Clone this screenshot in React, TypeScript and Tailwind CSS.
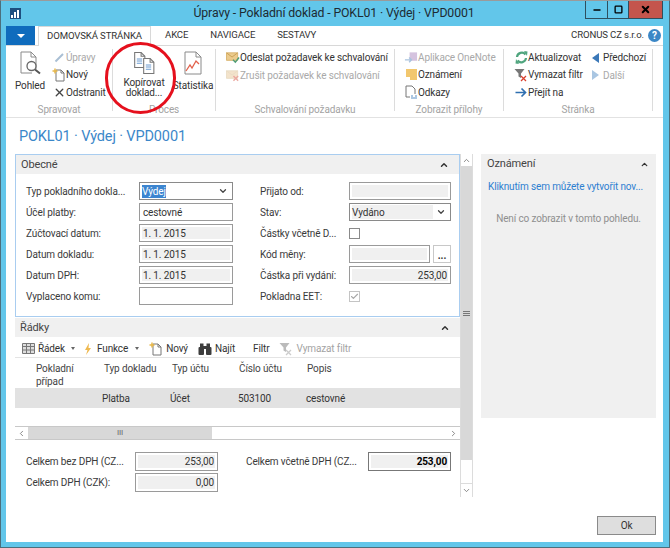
import type { ReactNode } from "react";
import { ChevronDown, ChevronLeft, ChevronRight, ChevronUp, Check, Minus, Square, X } from "lucide-react";

const Doc = ({ className = "w-[13px] h-[14px]", lines = false }: { className?: string; lines?: boolean }) => (
  <svg className={className} viewBox="0 0 14 16" fill="none">
    <path d="M2.5 1h6l3.500 3.500V15h-9.500z" fill="#fff" stroke="#777" />
    <path d="M8.500 1v3.500H12" stroke="#777" />
    {lines && <path d="M4.500 7h5M4.500 9h5M4.500 11h5" stroke="#6a9ad0" />}
  </svg>
);

const NewIcon = () => (
  <svg className="w-[14px] h-[14px]" viewBox="0 0 14 14" fill="none">
    <path d="M4 2h5l3 3v8H4z" fill="#fff" stroke="#777" />
    <path d="M9 2v3h3" stroke="#777" />
    <path d="M3 0.500v5M0.500 3h5" stroke="#e8b84a" strokeWidth="1.500" />
  </svg>
);

const FilterIcon = ({ muted = false }: { muted?: boolean }) => (
  <svg className="w-[14px] h-[14px]" viewBox="0 0 14 14" fill="none">
    <path d="M0.500 1h10L7 5.500V10L4.500 8.500V5.500z" fill={muted ? "#bbb" : "#777"} />
    <path d="M7 8l5 5M12 8l-5 5" stroke={muted ? "#ccc" : "#d9402e"} strokeWidth="1.300" />
  </svg>
);

const MailIcon = ({ muted = false }: { muted?: boolean }) => (
  <svg className="w-[14px] h-[13px]" viewBox="0 0 15 13" fill="none">
    <path d="M0.500 1.500h12v8h-12z" fill={muted ? "#f3e3cb" : "#eccb8d"} stroke={muted ? "#eadbc4" : "#d8b26a"} />
    <path d="M0.500 1.500l6 4.500 6-4.500" stroke={muted ? "#eadbc4" : "#c99f52"} />
    {muted ? (
      <path d="M8 7l5 5M13 7l-5 5" stroke="#eba9a0" strokeWidth="1.500" />
    ) : (
      <path d="M7.500 9l2.500 2.500 4-5" stroke="#4f9e76" strokeWidth="1.500" />
    )}
  </svg>
);

const SmallAction = ({ icon, children, muted = false, iconWidth = "w-[14px]" }: { icon: ReactNode; children: ReactNode; muted?: boolean; iconWidth?: string }) => (
  <div className={`flex h-[17.500px] items-center whitespace-nowrap ${muted ? "text-[#a9a9a9]" : "text-[#333]"}`}>
    <span className={`flex ${iconWidth} shrink-0 items-center justify-center`}>{icon}</span>
    <span>{children}</span>
  </div>
);

const RibbonGroup = ({ title, width, children }: { title: string; width: string; children: ReactNode }) => (
  <div className={`${width} flex h-[62px] shrink-0 flex-col border-[#dcdcdc] border-r`}>
    <div className="flex h-[52px] shrink-0 px-[1px]">{children}</div>
    <div className="mt-[3px] shrink-0 text-center text-[#a3a3a3] leading-[12px]">{title}</div>
  </div>
);

const Tab = ({ children, className = "" }: { children: ReactNode; className?: string }) => (
  <div className={`flex items-center text-[#333] ${className}`}>{children}</div>
);

const Box = ({ children, className = "", inner = "bg-[#f0f0f0]" }: { children?: ReactNode; className?: string; inner?: string }) => (
  <div className={`h-full border border-[#9a9a9a] bg-white p-[2px] ${className}`}>
    <div className={`flex h-full items-center overflow-hidden px-[1px] text-[#333] ${inner}`}>{children}</div>
  </div>
);

const Row = ({ label, children, labelClass = "w-[113px]", height = "h-[18px]" }: { label: string; children: ReactNode; labelClass?: string; height?: string }) => (
  <div className={`flex ${height} items-center`}>
    <div className={`${labelClass} shrink-0 whitespace-nowrap text-[#3a3a3a]`}>{label}</div>
    {children}
  </div>
);

const SectionHead = ({ title }: { title: string }) => (
  <div className="flex h-[19px] items-center justify-between bg-[#f0f0f0] pt-[1px] pr-[10px] pl-[5px] text-[#444] text-[11px]">
    {title}
    <ChevronUp className="h-[10px] w-[10px] text-[#333]" strokeWidth={3.500} />
  </div>
);

export default function App() {
  return (
    <div
      className="relative flex h-[548px] w-[670px] flex-col overflow-hidden border-[#4b6f7d] border-[1px] border-t-[#9a9a9a] bg-[#62c6ea] text-[10px] tracking-[-0.13px]"
      style={{ fontFamily: 'Roboto, "Open Sans", sans-serif' }}
    >
      {/* title bar */}
      <div className="flex h-[25px] shrink-0 items-start">
        <div className="mt-[7px] ml-[9px] flex h-[11px] w-[11px] items-end gap-[1px] bg-[#1d4f80] p-[1px]">
          <span className="h-[3px] w-[2px] bg-white" />
          <span className="h-[6px] w-[2px] bg-white" />
          <span className="h-[8px] w-[2px] bg-white" />
        </div>
        <div className="flex-1 pt-[4px] pl-[62px] text-center text-[#1d2b33] text-[12.300px] leading-[17px]">
          Úpravy - Pokladní doklad - POKL01 · Výdej · VPD0001
        </div>
        <div className="mr-[6px] flex h-[18px] border-[#2e4f5e] border-x border-b">
          <div className="flex w-[22px] items-center justify-center border-[#2e4f5e] border-r">
            <Minus className="h-[10px] w-[10px] text-black" strokeWidth={4} />
          </div>
          <div className="flex w-[21px] items-center justify-center border-[#2e4f5e] border-r">
            <Square className="h-[9px] w-[9px] text-black" strokeWidth={3.500} />
          </div>
          <div className="flex w-[33px] items-center justify-center bg-[#c4554c]">
            <X className="h-[11px] w-[11px] text-black" strokeWidth={4.500} />
          </div>
        </div>
      </div>

      {/* window body */}
      <div className="mr-[6px] mb-[5px] ml-[5px] flex min-h-0 flex-1 flex-col bg-white">
        {/* tabs */}
        <div className="flex h-[20px] shrink-0 border-[#d8d8d8] border-b text-[9.600px]">
          <div className="flex w-[29px] items-center justify-center bg-[#0f6cbd]">
            <span className="h-0 w-0 border-x-[4px] border-x-transparent border-t-[4px] border-t-white" />
          </div>
          <Tab className="-mb-[1px] ml-[3px] w-[113px] justify-center border-[#d8d8d8] border-x border-t bg-white">DOMOVSKÁ STRÁNKA</Tab>
          <Tab className="ml-[14px]">AKCE</Tab>
          <Tab className="ml-[22px]">NAVIGACE</Tab>
          <Tab className="ml-[22px]">SESTAVY</Tab>
          <div className="ml-auto flex items-center pr-[2px] text-[#333]">
            CRONUS CZ s.r.o.
            <span className="ml-[4px] flex h-[13px] w-[13px] items-center justify-center rounded-full bg-[#3b87c6] font-bold text-[10px] text-white">?</span>
          </div>
        </div>

        {/* ribbon */}
        <div className="flex h-[72px] shrink-0 border-[#e2e2e2] border-b pt-[3px]">
          <RibbonGroup title="Spravovat" width="w-[107px]">
            <div className="flex w-[45px] flex-col items-center pt-[2px] pl-[1px] text-[#333]">
              <svg className="h-[24px] w-[24px]" viewBox="0 0 24 24" fill="none">
                <path d="M3 1h10l5 5v12M3 1v21h11" fill="#fff" stroke="#8a8a8a" />
                <path d="M13 1v5h5" stroke="#8a8a8a" />
                <circle cx="13.500" cy="15" r="4.500" fill="#fff" stroke="#666" strokeWidth="1.300" />
                <path d="M17 18.500l5 4" stroke="#555" strokeWidth="2" />
              </svg>
              <span className="mt-[3px]">Pohled</span>
            </div>
            <div className="flex flex-col">
              <SmallAction muted icon={<svg className="h-[11px] w-[11px]" viewBox="0 0 11 11" fill="none"><path d="M1.500 9.500L9 2" stroke="#a9bfd4" strokeWidth="2" /></svg>}>Úpravy</SmallAction>
              <SmallAction icon={<NewIcon />}>Nový</SmallAction>
              <SmallAction icon={<X className="h-[13px] w-[13px] text-[#444]" strokeWidth={2.500} />}>Odstranit</SmallAction>
            </div>
          </RibbonGroup>
          <RibbonGroup title="Proces" width="w-[103px]">
            <div className="ml-[1px] flex w-[58px] flex-col items-center pt-[2px] text-center text-[#333] leading-[10px]">
              <div className="relative h-[24px] w-[24px]">
                <Doc className="absolute top-0 left-0 h-[18px] w-[15px]" lines />
                <Doc className="absolute right-0 bottom-0 h-[18px] w-[15px]" lines />
              </div>
              <span className="mt-[3px]">Kopírovat doklad...</span>
            </div>
            <div className="flex w-[40px] flex-col items-center pt-[2px] text-[#333]">
              <svg className="h-[24px] w-[20px]" viewBox="0 0 20 24" fill="none">
                <path d="M2 1h11l5 5v17H2z" fill="#fff" stroke="#8a8a8a" />
                <path d="M13 1v5h5" stroke="#8a8a8a" />
                <path d="M3 20l4-6 2 3 4-7 3 3" stroke="#e2604a" strokeWidth="1.300" />
              </svg>
              <span className="mt-[3px]">Statistika</span>
            </div>
          </RibbonGroup>
          <RibbonGroup title="Schvalování požadavku" width="w-[179px]">
            <div className="ml-[9px] flex flex-col">
              <SmallAction icon={<MailIcon />}>Odeslat požadavek ke schvalování</SmallAction>
              <SmallAction muted icon={<MailIcon muted />}>Zrušit požadavek ke schvalování</SmallAction>
            </div>
          </RibbonGroup>
          <RibbonGroup title="Zobrazit přílohy" width="w-[109px]">
            <div className="ml-[8px] flex flex-col">
              <SmallAction muted icon={<svg className="h-[13px] w-[14px]" viewBox="0 0 15 13" fill="none"><path d="M6 1h8v9H6z" fill="#d5c3df" /><path d="M1 9h7M5.500 6.500L8 9l-2.500 2.500" stroke="#a9c3de" strokeWidth="1.500" /></svg>}>Aplikace OneNote</SmallAction>
              <SmallAction icon={<svg className="h-[13px] w-[13px]" viewBox="0 0 13 13"><path d="M1 1h11v11H5V9H1z" fill="#f2c76e" /></svg>}>Oznámení</SmallAction>
              <SmallAction icon={<svg className="h-[14px] w-[14px]" viewBox="0 0 14 14" fill="none"><path d="M2 1h6l3 3v5M2 1v11h4" fill="#fff" stroke="#777" /><path d="M7 11h2M11 11h2M7 13h6" stroke="#5a8fc5" strokeWidth="1.200" /></svg>}>Odkazy</SmallAction>
            </div>
          </RibbonGroup>
          <RibbonGroup title="Stránka" width="w-[149px]">
            <div className="ml-[9px] flex w-[76px] flex-col">
              <SmallAction icon={<svg className="h-[13px] w-[13px]" viewBox="0 0 13 13" fill="none"><path d="M2 6a4.800 4.800 0 0 1 8.500-2.500M11 7a4.800 4.800 0 0 1-8.500 2.500" stroke="#4fa57e" strokeWidth="2.200" /><path d="M9 0l3.500 0.500L12 5zM4 13L0.500 12.500 1 8z" fill="#4fa57e" /></svg>}>Aktualizovat</SmallAction>
              <SmallAction icon={<FilterIcon />}>Vymazat filtr</SmallAction>
              <SmallAction icon={<svg className="h-[11px] w-[12px]" viewBox="0 0 12 11" fill="none"><path d="M0.500 5.500h9M6.500 1.500l4 4-4 4" stroke="#2f6fb0" strokeWidth="1.700" /></svg>}>Přejít na</SmallAction>
            </div>
            <div className="flex flex-col">
              <SmallAction iconWidth="w-[11px]" icon={<span className="h-0 w-0 border-y-[5px] border-y-transparent border-r-[7px] border-r-[#3b78b8]" />}><span className="ml-[2px]">Předchozí</span></SmallAction>
              <SmallAction muted iconWidth="w-[11px]" icon={<span className="h-0 w-0 border-y-[5px] border-y-transparent border-l-[7px] border-l-[#a9c6e2]" />}><span className="ml-[2px]">Další</span></SmallAction>
            </div>
          </RibbonGroup>
        </div>

        <div className="h-[35px] shrink-0 pt-[9px] pl-[13px] text-[#3b87c9] text-[14.500px] leading-[20px]">
          POKL01 · Výdej · VPD0001
        </div>

        {/* content */}
        <div className="mt-[1px] flex min-h-0 flex-1">
          <div className="ml-[9px] w-[445px] shrink-0">
            {/* general panel */}
            <div className="h-[163px] border border-[#a9cdf0]">
              <SectionHead title="Obecné" />
              <div className="flex pt-[8px] pl-[10px]">
                <div className="flex w-[234px] flex-col gap-[3px]">
                  <Row label="Typ pokladního dokla...">
                    <div className="flex h-full w-[94px] items-center justify-between border border-[#8a8a8a] pr-[4px] pl-[2px]">
                      <span className="bg-[#3c85d0] leading-[13px] text-white">Výdej</span>
                      <ChevronDown className="h-[10px] w-[10px] text-[#444]" strokeWidth={3} />
                    </div>
                  </Row>
                  <Row label="Účel platby:"><Box className="w-[94px]" inner="bg-white">cestovné</Box></Row>
                  <Row label="Zúčtovací datum:"><Box className="w-[94px]">1. 1. 2015</Box></Row>
                  <Row label="Datum dokladu:"><Box className="w-[94px]">1. 1. 2015</Box></Row>
                  <Row label="Datum DPH:"><Box className="w-[94px]">1. 1. 2015</Box></Row>
                  <Row label="Vyplaceno komu:"><Box className="w-[94px]" inner="bg-white" /></Row>
                </div>
                <div className="flex w-[191px] flex-col gap-[3px]">
                  <Row label="Přijato od:" labelClass="w-[89px]"><Box className="w-[102px]" /></Row>
                  <Row label="Stav:" labelClass="w-[89px]">
                    <div className="flex h-full w-[102px] items-center border border-[#8a8a8a] pr-[4px] pl-[2px]">
                      <span className="flex h-[14px] flex-1 items-center bg-[#f0f0f0] text-[#333]">Vydáno</span>
                      <ChevronDown className="ml-[3px] h-[10px] w-[10px] text-[#444]" strokeWidth={3} />
                    </div>
                  </Row>
                  <Row label="Částky včetně D..." labelClass="w-[89px]"><span className="h-[11px] w-[11px] border border-[#8a8a8a]" /></Row>
                  <Row label="Kód měny:" labelClass="w-[89px]">
                    <Box className="w-[81px]" />
                    <div className="ml-[3px] flex h-full w-[18px] items-end justify-center border border-[#c8c8c8] font-bold text-[#333] leading-[12px]">...</div>
                  </Row>
                  <Row label="Částka při vydání:" labelClass="w-[89px]"><Box className="w-[102px]"><span className="ml-auto">253,00</span></Box></Row>
                  <Row label="Pokladna EET:" labelClass="w-[89px]">
                    <span className="flex h-[11px] w-[11px] items-center justify-center border border-[#c4c4c4]">
                      <Check className="h-[9px] w-[9px] text-[#a8a8a8]" strokeWidth={3} />
                    </span>
                  </Row>
                </div>
              </div>
            </div>

            {/* lines */}
            <div className="mt-[1px]">
              <SectionHead title="Řádky" />
              <div className="flex h-[21px] items-center border-[#e4e4e4] border-b pt-[3px] pl-[7px] text-[#333]">
                <svg className="h-[11px] w-[13px]" viewBox="0 0 13 11" fill="#ddd" stroke="#777"><path d="M0.500 0.500h12v10h-12zM0.500 3.500h12M0.500 7h12M4.500 0.500v10M8.500 0.500v10" /></svg>
                <span className="ml-[3px]">Řádek</span>
                <span className="ml-[6px] h-0 w-0 border-x-[2.500px] border-x-transparent border-t-[3px] border-t-[#666]" />
                <svg className="ml-[9px] h-[12px] w-[8px]" viewBox="0 0 8 12"><path d="M5 0L1 7h2.500L2 12l5-7H4.500z" fill="#efb94f" /></svg>
                <span className="ml-[5px]">Funkce</span>
                <span className="ml-[7px] h-0 w-0 border-x-[2.500px] border-x-transparent border-t-[3px] border-t-[#666]" />
                <span className="ml-[10px]"><NewIcon /></span>
                <span className="ml-[3px]">Nový</span>
                <svg className="ml-[10px] h-[12px] w-[14px]" viewBox="0 0 14 12" fill="#3d3d3d"><rect x="0.500" y="4" width="5.500" height="8" rx="1" /><rect x="8" y="4" width="5.500" height="8" rx="1" /><rect x="2" y="0.500" width="3.500" height="5" /><rect x="8.500" y="0.500" width="3.500" height="5" /><rect x="5" y="3" width="4" height="3" /></svg>
                <span className="ml-[3px]">Najít</span>
                <span className="ml-[18px]">Filtr</span>
                <span className="ml-[10px]"><FilterIcon muted /></span>
                <span className="ml-[3px] text-[#a3a3a3]">Vymazat filtr</span>
              </div>
              <div className="grid h-[30px] grid-cols-[68px_68px_67px_68px_1fr] pt-[5px] pl-[21px] text-[#444] leading-[12.500px]">
                <span>Pokladní<br />případ</span>
                <span>Typ dokladu</span>
                <span>Typ účtu</span>
                <span>Číslo účtu</span>
                <span>Popis</span>
              </div>
              <div className="grid h-[20px] grid-cols-[68px_68px_68px_1fr] items-center bg-[#e2e2e2] pl-[87px] text-[#333]">
                <span>Platba</span>
                <span>Účet</span>
                <span>503100</span>
                <span>cestovné</span>
              </div>
              <div className="mt-[18px] flex h-[14px] border-[#c8c8c8] border-y bg-white">
                <div className="flex w-[13px] items-center justify-center"><ChevronLeft className="h-[9px] w-[9px] text-[#666]" /></div>
                <div className="flex w-[184px] items-center justify-center bg-[#d8d8d8] text-[#666] text-[8px] leading-none">III</div>
                <div className="flex-1" />
                <div className="flex w-[13px] items-center justify-center"><ChevronRight className="h-[9px] w-[9px] text-[#666]" /></div>
              </div>
            </div>

            {/* totals */}
            <div className="mt-[12px] flex pl-[11px] text-[#3a3a3a]">
              <div className="flex w-[220px] flex-col gap-[2px]">
                <Row height="h-[19px]" label="Celkem bez DPH (CZ..." labelClass="w-[109px]"><Box className="w-[83px]"><span className="ml-auto">253,00</span></Box></Row>
                <Row height="h-[19px]" label="Celkem DPH (CZK):" labelClass="w-[109px]"><Box className="w-[83px]"><span className="ml-auto">0,00</span></Box></Row>
              </div>
              <Row height="h-[19px]" label="Celkem včetně DPH (CZ..." labelClass="w-[122px]">
                <Box className="w-[83px] border-[#777]"><span className="ml-auto font-bold text-black">253,00</span></Box>
              </Row>
            </div>
          </div>

          {/* vertical scrollbar */}
          <div className="flex h-[343px] w-[13px] shrink-0 flex-col border-[#dcdcdc] border-x">
            <div className="flex h-[12px] items-center justify-center"><ChevronUp className="h-[9px] w-[9px] text-[#666]" /></div>
            <div className="flex h-[294px] items-center justify-center bg-[#d8d8d8]">
              <span className="h-[5px] w-[7px] border-[#777] border-y bg-[linear-gradient(#d8d8d8_40%,#777_40%,#777_60%,#d8d8d8_60%)]" />
            </div>
            <div className="flex-1" />
            <div className="flex h-[14px] items-center justify-center border-[#dcdcdc] border-t"><ChevronDown className="h-[9px] w-[9px] text-[#666]" /></div>
          </div>

          {/* factbox + ok */}
          <div className="ml-[8px] flex w-[175px] shrink-0 flex-col">
            <div className="h-[264px] bg-[#f0f0f0] text-center">
              <div className="flex h-[19px] items-center justify-between pt-[1px] pr-[7px] pl-[6px] text-[#444] text-[11px]">
                Oznámení
                <ChevronUp className="h-[9px] w-[9px] text-[#333]" strokeWidth={3.500} />
              </div>
              <div className="mt-[6px] whitespace-nowrap pl-[7px] text-left text-[#2d7fd0]">Kliknutím sem můžete vytvořit nov...</div>
              <div className="mt-[17px] text-[#8f8f8f]">Není co zobrazit v tomto pohledu.</div>
            </div>
            <div className="mt-[98px] flex justify-end">
              <div className="flex h-[19px] w-[59px] items-center justify-center border border-[#8a8a8a] bg-[#dedede] text-[#333]">Ok</div>
            </div>
          </div>
        </div>
      </div>

      {/* hand drawn annotation over the ribbon */}
      <div className="absolute top-[41px] left-[104px] h-[72px] w-[71px] rounded-full border-[3px] border-[#e5101d]" />
    </div>
  );
}
